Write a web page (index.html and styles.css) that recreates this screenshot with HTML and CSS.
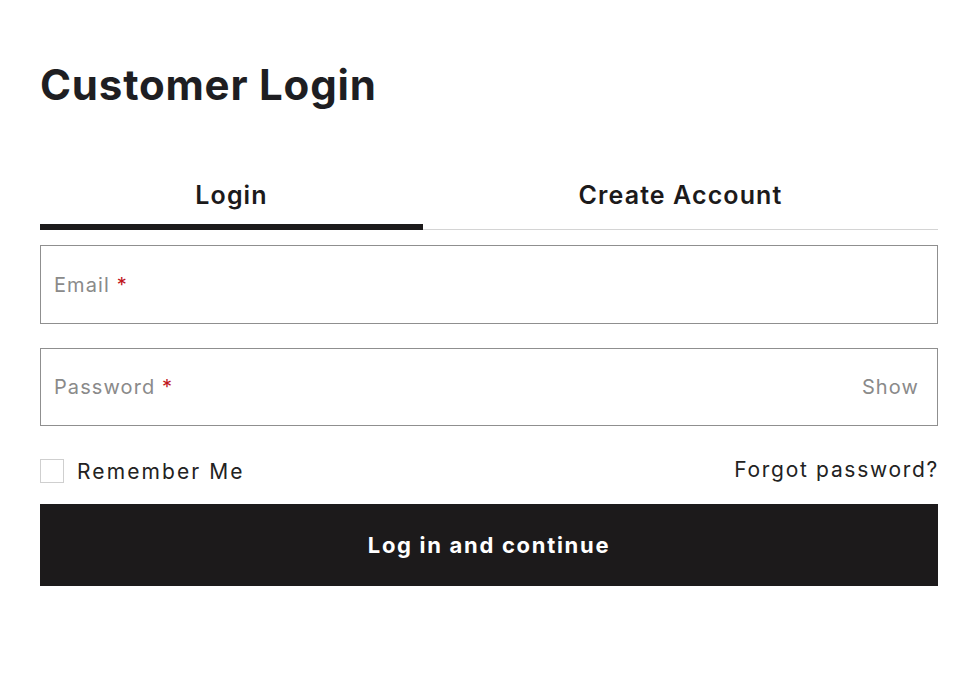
FILE: index.html
```html
<!DOCTYPE html>
<html lang="en">
<head>
<meta charset="utf-8">
<title>Customer Login</title>
<link rel="stylesheet" href="styles.css">
</head>
<body>
<main class="page">
  <h1 class="title">Customer Login</h1>
  <div class="tabs">
    <div class="tab tab-active">Login</div>
    <div class="tab">Create Account</div>
  </div>
  <form class="form">
    <label class="field">
      <span class="label">Email <span class="req">*</span></span>
    </label>
    <label class="field">
      <span class="label">Password <span class="req">*</span></span>
      <span class="show">Show</span>
    </label>
    <div class="row">
      <label class="remember"><span class="box"></span>Remember Me</label>
      <a class="forgot">Forgot password?</a>
    </div>
    <button type="button" class="submit">Log in and continue</button>
  </form>
</main>
</body>
</html>
```

FILE: styles.css
```css
* { box-sizing: border-box; }
html, body { margin: 0; background: #fff; }
body {
  font-family: "Inter", "Open Sans", "Liberation Sans", sans-serif;
  color: #1c1a1b;
}
.page {
  padding: 60px 32px 0 40px;
}
.title {
  margin: 0;
  font-size: 42px;
  font-weight: 700;
  line-height: 50px;
  color: #1e1e22;
  letter-spacing: 0.8px;
}
.tabs {
  display: flex;
  margin-top: 70px;
  border-bottom: 1px solid #d4d4d4;
}
.tab {
  text-align: center;
  font-size: 25px;
  font-weight: 600;
  line-height: 30px;
  letter-spacing: 1.1px;
  padding-bottom: 19px;
  color: #1c1a1b;
}
.tab-active {
  width: 383px;
  flex: none;
  border-bottom: 6px solid #1c1a1b;
  margin-bottom: -1px;
  padding-bottom: 14px;
}
.tab:not(.tab-active) { flex: 1; }
.form {
  display: flex;
  flex-direction: column;
  margin-top: 15px;
}
.field {
  display: flex;
  align-items: center;
  justify-content: space-between;
  height: 79px;
  border: 1px solid #8f8f8f;
  padding: 0 18px 0 13px;
  margin-bottom: 24px;
  font-size: 20px;
  letter-spacing: 1.1px;
  color: #8a8a8a;
}
.field + .field { height: 78px; margin-bottom: 33px; }
.req { color: #c0141c; }
.row {
  display: flex;
  justify-content: space-between;
  align-items: center;
  font-size: 21px;
  color: #222;
  height: 24px;
}
.remember {
  display: flex;
  align-items: center;
  gap: 13px;
  letter-spacing: 2.1px;
}
.box {
  width: 24px;
  height: 24px;
  border: 1px solid #cfcfcf;
  background: #fff;
}
.forgot { color: #222; margin-top: -4px; letter-spacing: 1.7px; margin-right: -1px; }
.submit {
  margin-top: 21px;
  height: 82px;
  border: 0;
  background: #1c1a1b;
  color: #fff;
  font-family: inherit;
  font-size: 22px;
  font-weight: 700;
  letter-spacing: 1.7px;
}
```
